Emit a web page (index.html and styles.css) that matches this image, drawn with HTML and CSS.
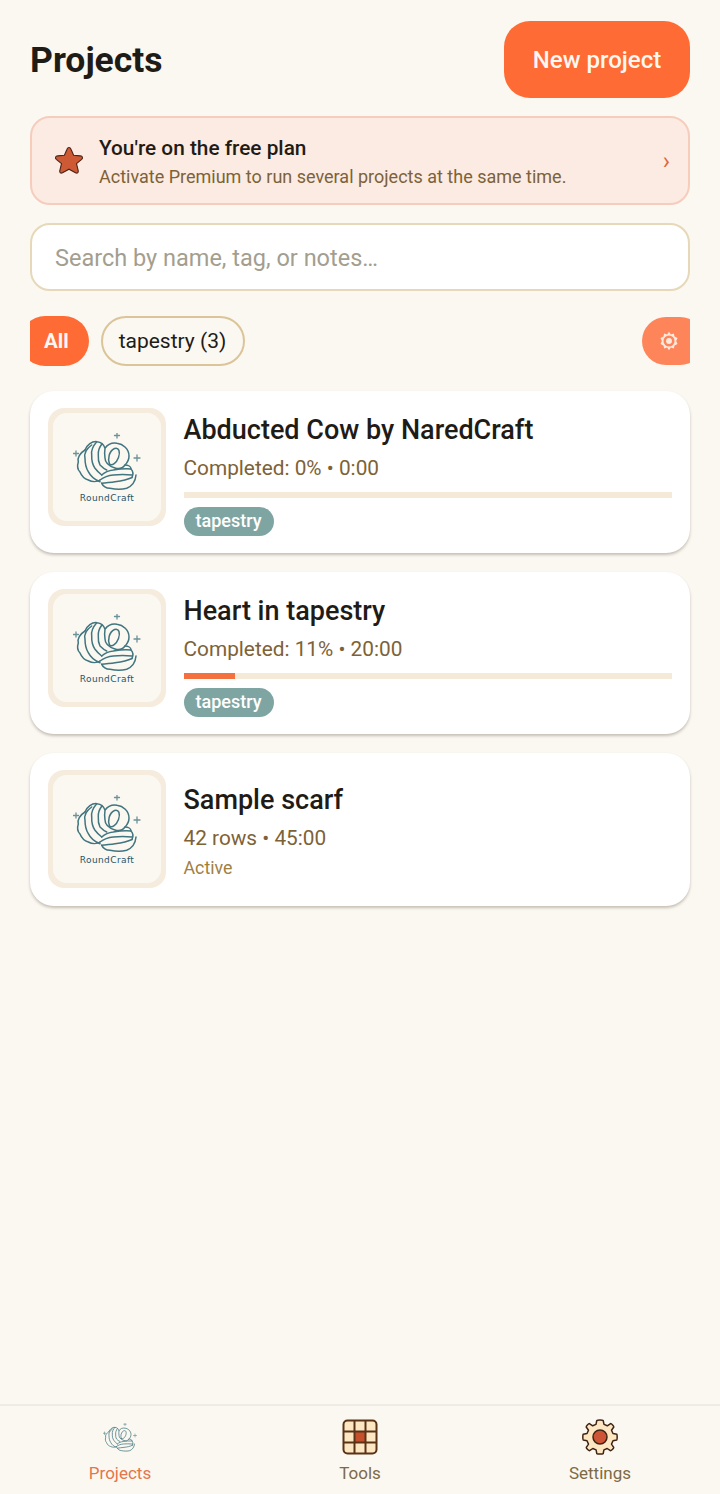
FILE: index.html
```html
<!DOCTYPE html>
<html lang="en">
<head>
<meta charset="utf-8">
<title>Projects</title>
<link rel="stylesheet" href="styles.css">
</head>
<body>
<svg class="defs" width="0" height="0" aria-hidden="true">
  <symbol id="yarn" viewBox="1 0 68 58">
    <g fill="none" stroke="#41757f" stroke-width="1.500" stroke-linecap="round" stroke-linejoin="round">
      <path d="M13 17C15 12 20 8 25 8.700C29 9 32 12 33 15.300C36 11 40 9.500 45 10.300C51 11 57 16 57 23C57 27 55 30 53 32C50 36 46 36 43 35C37 33 33 29 33 25C32.500 21 32.500 18 33 15.300"/>
      <path d="M13 17C8 20 5 25 6.300 29C5 33 6 37 8 39C10 44 13 46 16.300 47C20 49 25 49 28 47"/>
      <path d="M19.700 12C14 16 12 21 13 25.300C13 31 14 35 16.300 38.700C19 44 23 47 28 48.700"/>
      <path d="M24.700 8.700C21 13 19 18 19.700 22C19.500 27 20 31 23 35.300C25 38 27 40 29.700 42"/>
      <path d="M29.700 11.300C27 15 26 19 26.300 22C26 26 26.500 29 28 32C30 34 32 36 34.700 37"/>
      <path d="M37.500 31C35.500 26 37 18 42.500 15.500C47 14 48.500 19 46.500 24.500C44.500 30 40 33 37.500 31Z"/>
      <path d="M29.700 42C33 39 37 37.500 41.300 37C47 36 53 35.500 59 36"/>
      <path d="M28 47C32 44 36 42.500 41.300 42C47 41.500 54 41.500 60 42"/>
      <path d="M29.700 50.300C34 49.500 38 49.500 43 48.700C49 48 55 47 60 44.500"/>
      <path d="M53 32C56 32 59 33.500 59 36C61 38 61.500 41 60 44.500"/>
      <path d="M29.700 50.300C31 53 34 55 38 55.300C44 56.500 50 56.500 54.700 55.300C60 53 63.500 48 64 42"/>
    </g>
    <g fill="none" stroke="#6b9298" stroke-width="1.300" stroke-linecap="round">
      <path d="M45 0V5M42.500 2.500H47.500"/>
      <path d="M4 18V23M1.500 20.500H6.500"/>
      <path d="M65 22V28M62 25H68"/>
    </g>
  </symbol>
</svg>

<main class="page">
  <header class="top">
    <h1 class="title">Projects</h1>
    <button class="new-btn">New project</button>
  </header>

  <section class="plan">
    <svg class="star" viewBox="0 0 32 32" aria-hidden="true">
      <path d="M16 2.500C17 2.500 17.600 3.200 18 4.200L20.600 10.300L27.300 10.900C29.600 11.100 30.200 12.900 28.700 14.300L23.500 18.700L25.200 25.600C25.700 27.600 24.200 28.700 22.500 27.700L16 24.200L9.500 27.700C7.800 28.700 6.300 27.600 6.800 25.600L8.500 18.700L3.300 14.300C1.800 12.900 2.400 11.100 4.700 10.900L11.400 10.300L14 4.200C14.400 3.200 15 2.500 16 2.500Z" fill="#cd5a34" stroke="#4a2317" stroke-width="1.100"/>
    </svg>
    <div class="plan-text">
      <div class="plan-title">You're on the free plan</div>
      <div class="plan-sub">Activate Premium to run several projects at the same time.</div>
    </div>
    <span class="plan-arrow">›</span>
  </section>

  <div class="search">Search by name, tag, or notes…</div>

  <div class="filters">
    <span class="chip chip-all">All</span>
    <span class="chip chip-tag">tapestry (3)</span>
    <span class="gear-chip">
      <svg class="gear-small" viewBox="0 0 24 24" aria-hidden="true">
        <path d="M12 2L14 4.800L17.300 3.800L18 7.200L21.300 8.600L19.800 12L21.300 15.400L18 16.800L17.300 20.200L14 19.200L12 22L10 19.200L6.700 20.200L6 16.800L2.700 15.400L4.200 12L2.700 8.600L6 7.200L6.700 3.800L10 4.800Z" fill="#fdeadd"/>
        <circle cx="12" cy="12" r="6" fill="#fe855a"/>
        <circle cx="12" cy="12" r="3.200" fill="#fdeadd"/>
      </svg>
    </span>
  </div>

  <article class="card">
    <div class="thumb"><div class="thumb-in"><svg class="logo"><use href="#yarn"/></svg><span class="logo-text">RoundCraft</span></div></div>
    <div class="info">
      <h2 class="name">Abducted Cow by NaredCraft</h2>
      <div class="meta">Completed: 0% • 0:00</div>
      <div class="bar"><div class="fill" style="width:0%"></div></div>
      <span class="tag">tapestry</span>
    </div>
  </article>

  <article class="card">
    <div class="thumb"><div class="thumb-in"><svg class="logo"><use href="#yarn"/></svg><span class="logo-text">RoundCraft</span></div></div>
    <div class="info">
      <h2 class="name">Heart in tapestry</h2>
      <div class="meta">Completed: 11% • 20:00</div>
      <div class="bar"><div class="fill" style="width:10.500%"></div></div>
      <span class="tag">tapestry</span>
    </div>
  </article>

  <article class="card card-short">
    <div class="thumb"><div class="thumb-in"><svg class="logo"><use href="#yarn"/></svg><span class="logo-text">RoundCraft</span></div></div>
    <div class="info info-short">
      <h2 class="name">Sample scarf</h2>
      <div class="meta">42 rows • 45:00</div>
      <div class="status">Active</div>
    </div>
  </article>
</main>

<nav class="nav">
  <div class="nav-item nav-active">
    <svg class="nav-logo"><use href="#yarn"/></svg>
    <span>Projects</span>
  </div>
  <div class="nav-item">
    <svg class="nav-icon" viewBox="0 0 36 36" aria-hidden="true">
      <rect x="1.500" y="1.500" width="33" height="33" rx="4" fill="#fde7c2" stroke="#5a3216" stroke-width="2"/>
      <rect x="12.500" y="12.500" width="11" height="11" fill="#c6502c"/>
      <path d="M12.500 1.500V34.500M23.500 1.500V34.500M1.500 12.500H34.500M1.500 23.500H34.500" fill="none" stroke="#5a3216" stroke-width="2"/>
    </svg>
    <span>Tools</span>
  </div>
  <div class="nav-item">
    <svg class="nav-icon" viewBox="0 0 36 36" aria-hidden="true">
      <path d="M14.800 1.500C15.500 .9 20.500 .9 21.200 1.500L22 5.400L25.300 6.800L28.600 4.600C29.500 4.600 32 7.200 31.800 8L29.500 11.200L31 14.500L34.800 15.200C35.300 16 35.300 20.500 34.800 21L31 21.800L29.500 25.100L31.700 28.400C31.700 29.300 29.200 31.800 28.400 31.700L25.200 29.500L21.900 30.900L21.200 34.600C20.400 35.200 15.600 35.200 14.800 34.600L14.100 30.900L10.800 29.500L7.600 31.700C6.800 31.800 4.300 29.300 4.300 28.400L6.500 25.100L5 21.800L1.200 21C.7 20.500 .7 16 1.200 15.200L5 14.500L6.500 11.200L4.200 8C4 7.200 6.500 4.600 7.400 4.600L10.700 6.800L14 5.400Z" fill="#fde7c2" stroke="#3f2414" stroke-width="1.500" stroke-linejoin="round"/>
      <circle cx="18" cy="18" r="7" fill="#cd5434" stroke="#3f2414" stroke-width="1.500"/>
    </svg>
    <span>Settings</span>
  </div>
</nav>
</body>
</html>
```
FILE: styles.css
```css
* { box-sizing: border-box; }
html, body { margin: 0; padding: 0; }
body {
  width: 720px;
  height: 1494px;
  background: #fbf8f2;
  font-family: Roboto, "Noto Sans", sans-serif;
  color: #1f1b16;
  display: flex;
  flex-direction: column;
  overflow: hidden;
}
.defs { position: absolute; }
.page { flex: 1; padding: 21px 30px 0; }

.top { display: flex; justify-content: space-between; align-items: center; height: 77px; }
.title { margin: 0; font-size: 35.500px; font-weight: 700; }
.new-btn {
  width: 186px; height: 77px; border: 0; border-radius: 26px;
  background: #ff6b35; color: #fff7f0;
  font: 500 24px Roboto, sans-serif;
}

.plan {
  margin-top: 18px; height: 89px; display: flex; align-items: center;
  background: #fbebe3; border: 2px solid #f6cdbd; border-radius: 20px;
  padding: 0 18px 0 21px;
}
.star { width: 32px; height: 32px; flex: none; margin-right: 14px; }
.plan-text { flex: 1; padding-top: 4px; }
.plan-title { font-size: 20.800px; font-weight: 500; line-height: 28px; color: #1f1b16; }
.plan-sub { margin-top: 1px; font-size: 18px; line-height: 28px; color: #7d6237; }
.plan-arrow { color: #e0643c; font-size: 24px; line-height: 24px; }

.search {
  margin-top: 18px; height: 68px; display: flex; align-items: center;
  background: #fff; border: 2px solid #e6d8b8; border-radius: 20px;
  padding: 2px 24px 0 23px; font-size: 23.500px; color: #a39e8f;
}

.filters { margin-top: 25px; height: 51px; display: flex; align-items: flex-start; overflow: hidden; }
.chip { height: 50px; border-radius: 25px; display: flex; align-items: center; flex: none; }
.chip-all {
  margin-left: -10px; padding: 0 20px 0 24px; background: #ff6b35;
  color: #fff7f0; font-size: 20.500px; font-weight: 700;
}
.chip-tag {
  margin-left: 12px; padding: 0 17px 0 16px; border: 2px solid #dbc498;
  font-size: 21px; color: #1f1b16;
}
.gear-chip {
  margin-left: auto; margin-top: 1px; margin-right: -14px; width: 62px; height: 48px; border-radius: 24px;
  background: #fe855a; display: flex; align-items: center; padding-left: 16px; flex: none;
}
.gear-small { width: 22px; height: 22px; }

.card {
  margin-top: 19px; height: 162px; background: #fff; border-radius: 24px;
  padding: 17px 18px 0; display: flex; gap: 17.500px;
  box-shadow: 0 2px 3px rgba(60, 45, 25, .28);
}
.filters + .card { margin-top: 24px; }
.card-short { height: 153px; }
.thumb {
  width: 118px; height: 118px; flex: none; background: #f6ecdd;
  border-radius: 16px; padding: 5px;
}
.thumb-in {
  width: 100%; height: 100%; background: #fbf8f2; border-radius: 14px;
  display: flex; flex-direction: column; align-items: center; padding-top: 20px;
}
.logo { width: 68px; height: 58px; flex: none; }
.logo-text {
  margin-top: 1px; font: 9px/12px "DejaVu Sans", sans-serif;
  letter-spacing: .4px; color: #24566a;
}
.info { flex: 1; min-width: 0; }
.info-short { padding-top: 8px; }
.name { margin: 6px 0 0; font-size: 27px; font-weight: 500; line-height: 32px; color: #1f1b16; }
.meta { margin-top: 7px; font-size: 20.800px; line-height: 30px; color: #7d6237; }
.bar { margin-top: 9px; height: 6px; background: #f5e9d8; overflow: hidden; }
.fill { height: 100%; background: #f4703f; }
.tag {
  display: inline-block; margin-top: 9px; height: 29px; padding: 0 12px;
  border-radius: 15px; background: #7fa5a3; color: #fff;
  font-size: 18px; font-weight: 500; line-height: 28px;
}
.status { margin-top: 2px; font-size: 17.800px; line-height: 26px; color: #a1803f; }

.nav {
  height: 90px; flex: none; display: grid; grid-template-columns: repeat(3, 1fr);
  border-top: 2px solid #efebe5; background: #fbf8f2;
}
.nav-item {
  display: flex; flex-direction: column; align-items: center; padding-top: 13px;
  font-size: 17px; line-height: 24px; color: #7d6a45;
}
.nav-icon { width: 36px; height: 36px; margin-bottom: 6px; }
.nav-logo { width: 34px; height: 29px; margin: 4px 0 9px; }
.nav-active { color: #e4754c; }
```
